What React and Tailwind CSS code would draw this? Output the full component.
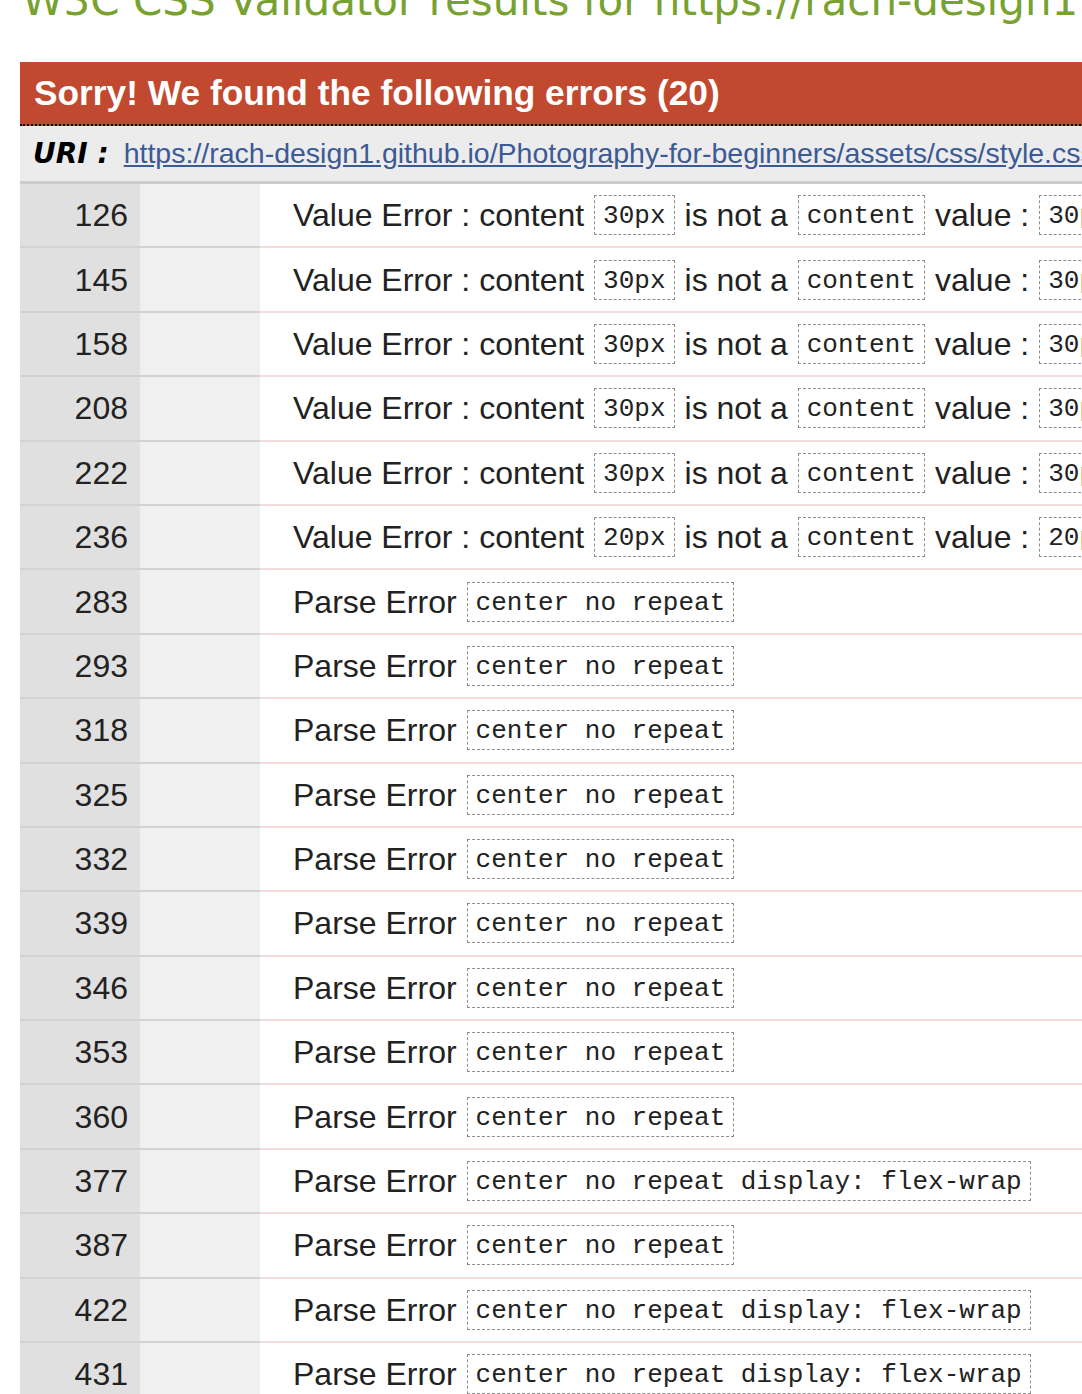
const ERRORS = [
  { line: 126, kind: "value", px: "30px" },
  { line: 145, kind: "value", px: "30px" },
  { line: 158, kind: "value", px: "30px" },
  { line: 208, kind: "value", px: "30px" },
  { line: 222, kind: "value", px: "30px" },
  { line: 236, kind: "value", px: "20px" },
  { line: 283, kind: "parse", code: "center no repeat" },
  { line: 293, kind: "parse", code: "center no repeat" },
  { line: 318, kind: "parse", code: "center no repeat" },
  { line: 325, kind: "parse", code: "center no repeat" },
  { line: 332, kind: "parse", code: "center no repeat" },
  { line: 339, kind: "parse", code: "center no repeat" },
  { line: 346, kind: "parse", code: "center no repeat" },
  { line: 353, kind: "parse", code: "center no repeat" },
  { line: 360, kind: "parse", code: "center no repeat" },
  { line: 377, kind: "parse", code: "center no repeat display: flex-wrap" },
  { line: 387, kind: "parse", code: "center no repeat" },
  { line: 422, kind: "parse", code: "center no repeat display: flex-wrap" },
  { line: 431, kind: "parse", code: "center no repeat display: flex-wrap" },
  { line: 438, kind: "parse", code: "center no repeat" },
];

const sans = "font-['Liberation_Sans',Arial,sans-serif]";

function Code({ children }) {
  return (
    <span className="inline-block border border-dashed border-[#8e8e8e] px-[8px] pt-[5px] pb-[3px] leading-[30px] text-[26px] text-[#222] font-['Liberation_Mono','Courier_New',monospace] whitespace-pre">
      {children}
    </span>
  );
}

function Row({ err }) {
  return (
    <div className="flex h-[64.4px]">
      <div className="w-[120px] shrink-0 bg-[#e0e0e0] border-b-2 border-[#d2d2d2] flex items-center justify-end pr-[12px]">
        {err.line}
      </div>
      <div className="w-[120px] shrink-0 bg-[#f0f0f0] border-b-2 border-[#d2d2d2]" />
      <div className="flex-1 border-b-2 border-[#f5dcdc] flex items-center gap-[10px] pl-[33px] whitespace-nowrap">
        {err.kind === "value" ? (
          <>
            <span>Value Error : content</span>
            <Code>{err.px}</Code>
            <span>is not a</span>
            <Code>content</Code>
            <span>value :</span>
            <Code>{err.px}</Code>
          </>
        ) : (
          <>
            <span>Parse Error</span>
            <Code>{err.code}</Code>
          </>
        )}
      </div>
    </div>
  );
}

export default function App() {
  return (
    <div className="w-[1082px] h-[1394px] overflow-hidden bg-white">
      {/* Title, cut off at the top */}
      <h1 className="mt-[-20px] ml-[22px] leading-[42px] text-[42px] text-[#78a22f] font-['DejaVu_Sans',Verdana,sans-serif] whitespace-nowrap">
        W3C CSS Validator results for https://rach-design1.github.io/Photography-for-beginners/assets/css/style.css
      </h1>

      <div className={`ml-[20px] mt-[40px] w-[1300px] text-[32px] text-[#222] ${sans}`}>
        {/* Red header */}
        <div className="h-[64px] bg-[#c1492f] border-b-2 border-dotted border-black flex items-center px-[14px]">
          <span className="text-white font-bold text-[35.3px] whitespace-nowrap">
            Sorry! We found the following errors (20)
          </span>
        </div>

        {/* URI */}
        <div className="h-[58px] bg-[#ececec] border-b-[3px] border-[#cccccc] flex items-center gap-[15px] px-[13px] text-[28.5px] whitespace-nowrap">
          <span className="font-bold italic text-black font-['DejaVu_Sans',Verdana,sans-serif] text-[28px]">URI :</span>
          <a href="#" className="text-[#3b5a96] underline">
            https://rach-design1.github.io/Photography-for-beginners/assets/css/style.css
          </a>
        </div>

        {ERRORS.map((err) => (
          <Row key={err.line} err={err} />
        ))}
      </div>
    </div>
  );
}
